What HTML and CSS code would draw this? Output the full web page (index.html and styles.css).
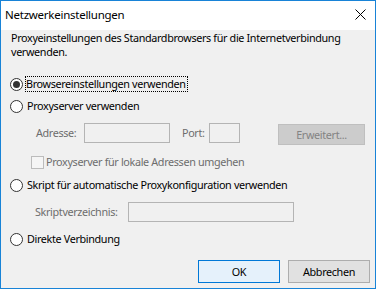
FILE: index.html
```html
<!DOCTYPE html>
<html lang="de-DE">
<head>
  <meta charset="utf-8">
  <title>Netzwerkeinstellungen</title>
  <link rel="stylesheet" href="styles.css">
</head>
<body>
  <div class="window">
    <div class="titlebar">
      <span class="title">Netzwerkeinstellungen</span>
      <span class="close">
        <svg width="11" height="11" viewBox="0 0 11 11"><path d="M0.5 0.5L10.5 10.5M10.5 0.5L0.5 10.5" stroke="#000" stroke-width="1" fill="none"/></svg>
      </span>
    </div>

    <div class="body">
      <p class="intro">Proxyeinstellungen des Standardbrowsers für die Internetverbindung<br>verwenden.</p>

      <div class="option option-first">
        <span class="radio"><span class="dot"></span></span>
        <span class="label focus">Browsereinstellungen verwenden</span>
      </div>
      <div class="option">
        <span class="radio"></span>
        <span class="label">Proxyserver verwenden</span>
      </div>

      <div class="field-row addr-row">
        <span class="dim addr-label">Adresse:</span>
        <span class="field addr-field"></span>
        <span class="dim port-label">Port:</span>
        <span class="field port-field"></span>
        <span class="btn-disabled">Erweitert...</span>
      </div>

      <div class="check-row">
        <span class="checkbox"></span>
        <span class="dim check-label">Proxyserver für lokale Adressen umgehen</span>
      </div>

      <div class="option option-script">
        <span class="radio"></span>
        <span class="label">Skript für automatische Proxykonfiguration verwenden</span>
      </div>

      <div class="field-row script-row">
        <span class="dim script-label">Skriptverzeichnis:</span>
        <span class="field script-field"></span>
      </div>

      <div class="option option-direct">
        <span class="radio"></span>
        <span class="label">Direkte Verbindung</span>
      </div>

      <div class="buttons">
        <span class="btn btn-default">OK</span>
        <span class="btn">Abbrechen</span>
      </div>
    </div>
  </div>
</body>
</html>
```

FILE: styles.css
```css
* {
    box-sizing: border-box;
}

body {
    margin: 0;
    background: #fff;
    font-family: "Noto Sans", sans-serif;
    font-size: 10.8px;
    letter-spacing: -0.35px;
    color: #000;
}

.window {
    width: 376px;
    height: 289px;
    border: 1px solid #1883d7;
    display: flex;
    flex-direction: column;
}

.titlebar {
    height: 29px;
    background: #fff;
    display: flex;
    align-items: center;
    padding: 0 9px 2px 4px;
}

.title {
    font-size: 11.5px;
    letter-spacing: -0.25px;
}

.close {
    margin-left: auto;
    display: flex;
}

.body {
    flex: 1;
    background: #f0f0f0;
    padding: 1px 5px 5px 9px;
    display: flex;
    flex-direction: column;
}

.intro {
    margin: 0 0 0 1px;
    line-height: 14px;
    height: 28px;
}

/* radio rows */
.option {
    display: flex;
    align-items: center;
    height: 22px;
}
.option-first { margin-top: 14px; }
.option-script { margin-top: 3px; }
.option-direct { margin-top: 5px; }

.radio {
    width: 13px;
    height: 13px;
    border: 1px solid #333;
    border-radius: 50%;
    background: #fff;
    flex: none;
    display: flex;
    align-items: center;
    justify-content: center;
}
.dot {
    width: 7px;
    height: 7px;
    border-radius: 50%;
    background: #333;
}

.label {
    margin-left: 4px;
    line-height: 14px;
}
.focus {
    margin-left: 2px;
    padding: 0 1px 0 0;
    border: 1px dotted #000;
}

/* disabled fields */
.dim {
    color: #6d6d6d;
    line-height: 14px;
}

.field-row {
    display: flex;
    align-items: center;
    height: 22px;
    margin-top: 5px;
}

.field {
    height: 20px;
    border: 1px solid #b4b4b4;
    background: #f0f0f0;
    flex: none;
}

.addr-label { margin-left: 26px; width: 48px; }
.addr-field { width: 86px; }
.port-label { margin-left: 12px; width: 27px; }
.port-field { width: 31px; }

.btn-disabled {
    margin-left: 38px;
    margin-top: 3px;
    width: 87px;
    height: 21px;
    border: 1px solid #bfbfbf;
    background: #cccccc;
    color: #838383;
    display: flex;
    align-items: center;
    justify-content: center;
}

.check-row {
    display: flex;
    align-items: center;
    height: 18px;
    margin-top: 9px;
}
.checkbox {
    margin-left: 21px;
    width: 13px;
    height: 13px;
    border: 1px solid #bcbcbc;
    background: #f5f5f5;
    flex: none;
}
.check-label { margin-left: 2px; }

.script-label { margin-left: 25px; width: 93px; }
.script-field { width: 166px; }

/* dialog buttons */
.buttons {
    margin-top: auto;
    display: flex;
    justify-content: flex-end;
    gap: 8px;
}
.btn {
    width: 82px;
    height: 23px;
    border: 1px solid #adadad;
    background: #e1e1e1;
    display: flex;
    align-items: center;
    justify-content: center;
}
.btn-default {
    border-color: #0078d7;
    background: #e5f1fb;
}
```
